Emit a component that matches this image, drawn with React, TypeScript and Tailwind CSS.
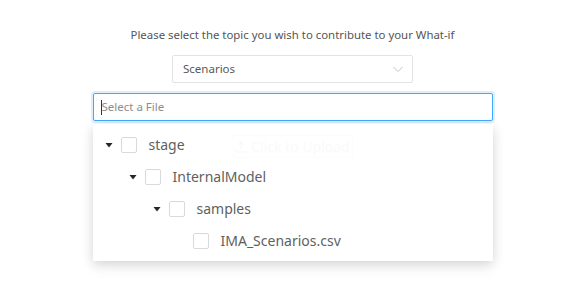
import React from "react";

const Caret = () => (
  <svg width="10" height="10" viewBox="0 0 10 10" className="shrink-0">
    <path d="M1.5 3 L8.5 3 L5 7.5 Z" fill="#262626" />
  </svg>
);

const Box = () => (
  <span className="block w-4 h-4 shrink-0 rounded-[2px] border border-[#d9d9d9] bg-white" />
);

function Row({ level, caret, label }: { level: number; caret: boolean; label: string }) {
  return (
    <div className="flex items-center h-8" style={{ paddingLeft: 4 + level * 24 }}>
      <span className="w-6 h-6 flex items-center justify-center shrink-0">{caret ? <Caret /> : null}</span>
      <Box />
      <span className="ml-3 text-[14px] text-[#5f5f5f] leading-6">{label}</span>
    </div>
  );
}

export default function App() {
  return (
    <div className="w-[576px] h-[305px] bg-white" style={{ fontFamily: '"Noto Sans", "Open Sans", sans-serif' }}>
      <div className="flex flex-col items-center pt-[26px] pl-[9px]">
        <p className="text-[11.4px] text-[#555] leading-[18px]">Please select the topic you wish to contribute to your What-if</p>
        <div className="mt-[11px] w-[241px] h-[28px] border border-[#e3e3e3] rounded-[2px] flex items-center justify-between pl-[10px] pr-[8px]">
          <span className="text-[11.5px] text-[#595959]">Scenarios</span>
          <svg width="12" height="12" viewBox="0 0 12 12"><path d="M1.5 4 L6 8.5 L10.5 4" fill="none" stroke="#c4c4c4" strokeWidth="1" /></svg>
        </div>
        <div className="relative mt-[10px] w-[400px]">
          <div className="h-[28px] border border-[#40a9ff] rounded-[2px] shadow-[0_0_0_2px_rgba(24,144,255,0.15)] flex items-center px-[7px]">
            <span className="w-px h-[15px] bg-[#333]" />
            <span className="text-[11.5px] text-[#8c8c8c]">Select a File</span>
          </div>
          <div className="absolute left-0 top-[31px] w-[400px] bg-white shadow-[0_3px_10px_rgba(0,0,0,0.12),0_6px_16px_rgba(0,0,0,0.06)] pt-[5px] pb-[4px]">
            <div className="absolute left-[140px] top-[11px] w-[120px] h-[23px] border border-[#fcfcfc] flex items-center justify-center gap-1 text-[14px] text-[#fafafa]">
              <svg width="12" height="12" viewBox="0 0 12 12"><path d="M6 1 V8 M3 4 L6 1 L9 4 M1 9 V11 H11 V9" fill="none" stroke="#f8f8f8" strokeWidth="1.2" /></svg>
              Click to Upload
            </div>
            <div className="relative">
              <Row level={0} caret label="stage" />
              <Row level={1} caret label="InternalModel" />
              <Row level={2} caret label="samples" />
              <Row level={3} caret={false} label="IMA_Scenarios.csv" />
            </div>
          </div>
        </div>
      </div>
    </div>
  );
}
